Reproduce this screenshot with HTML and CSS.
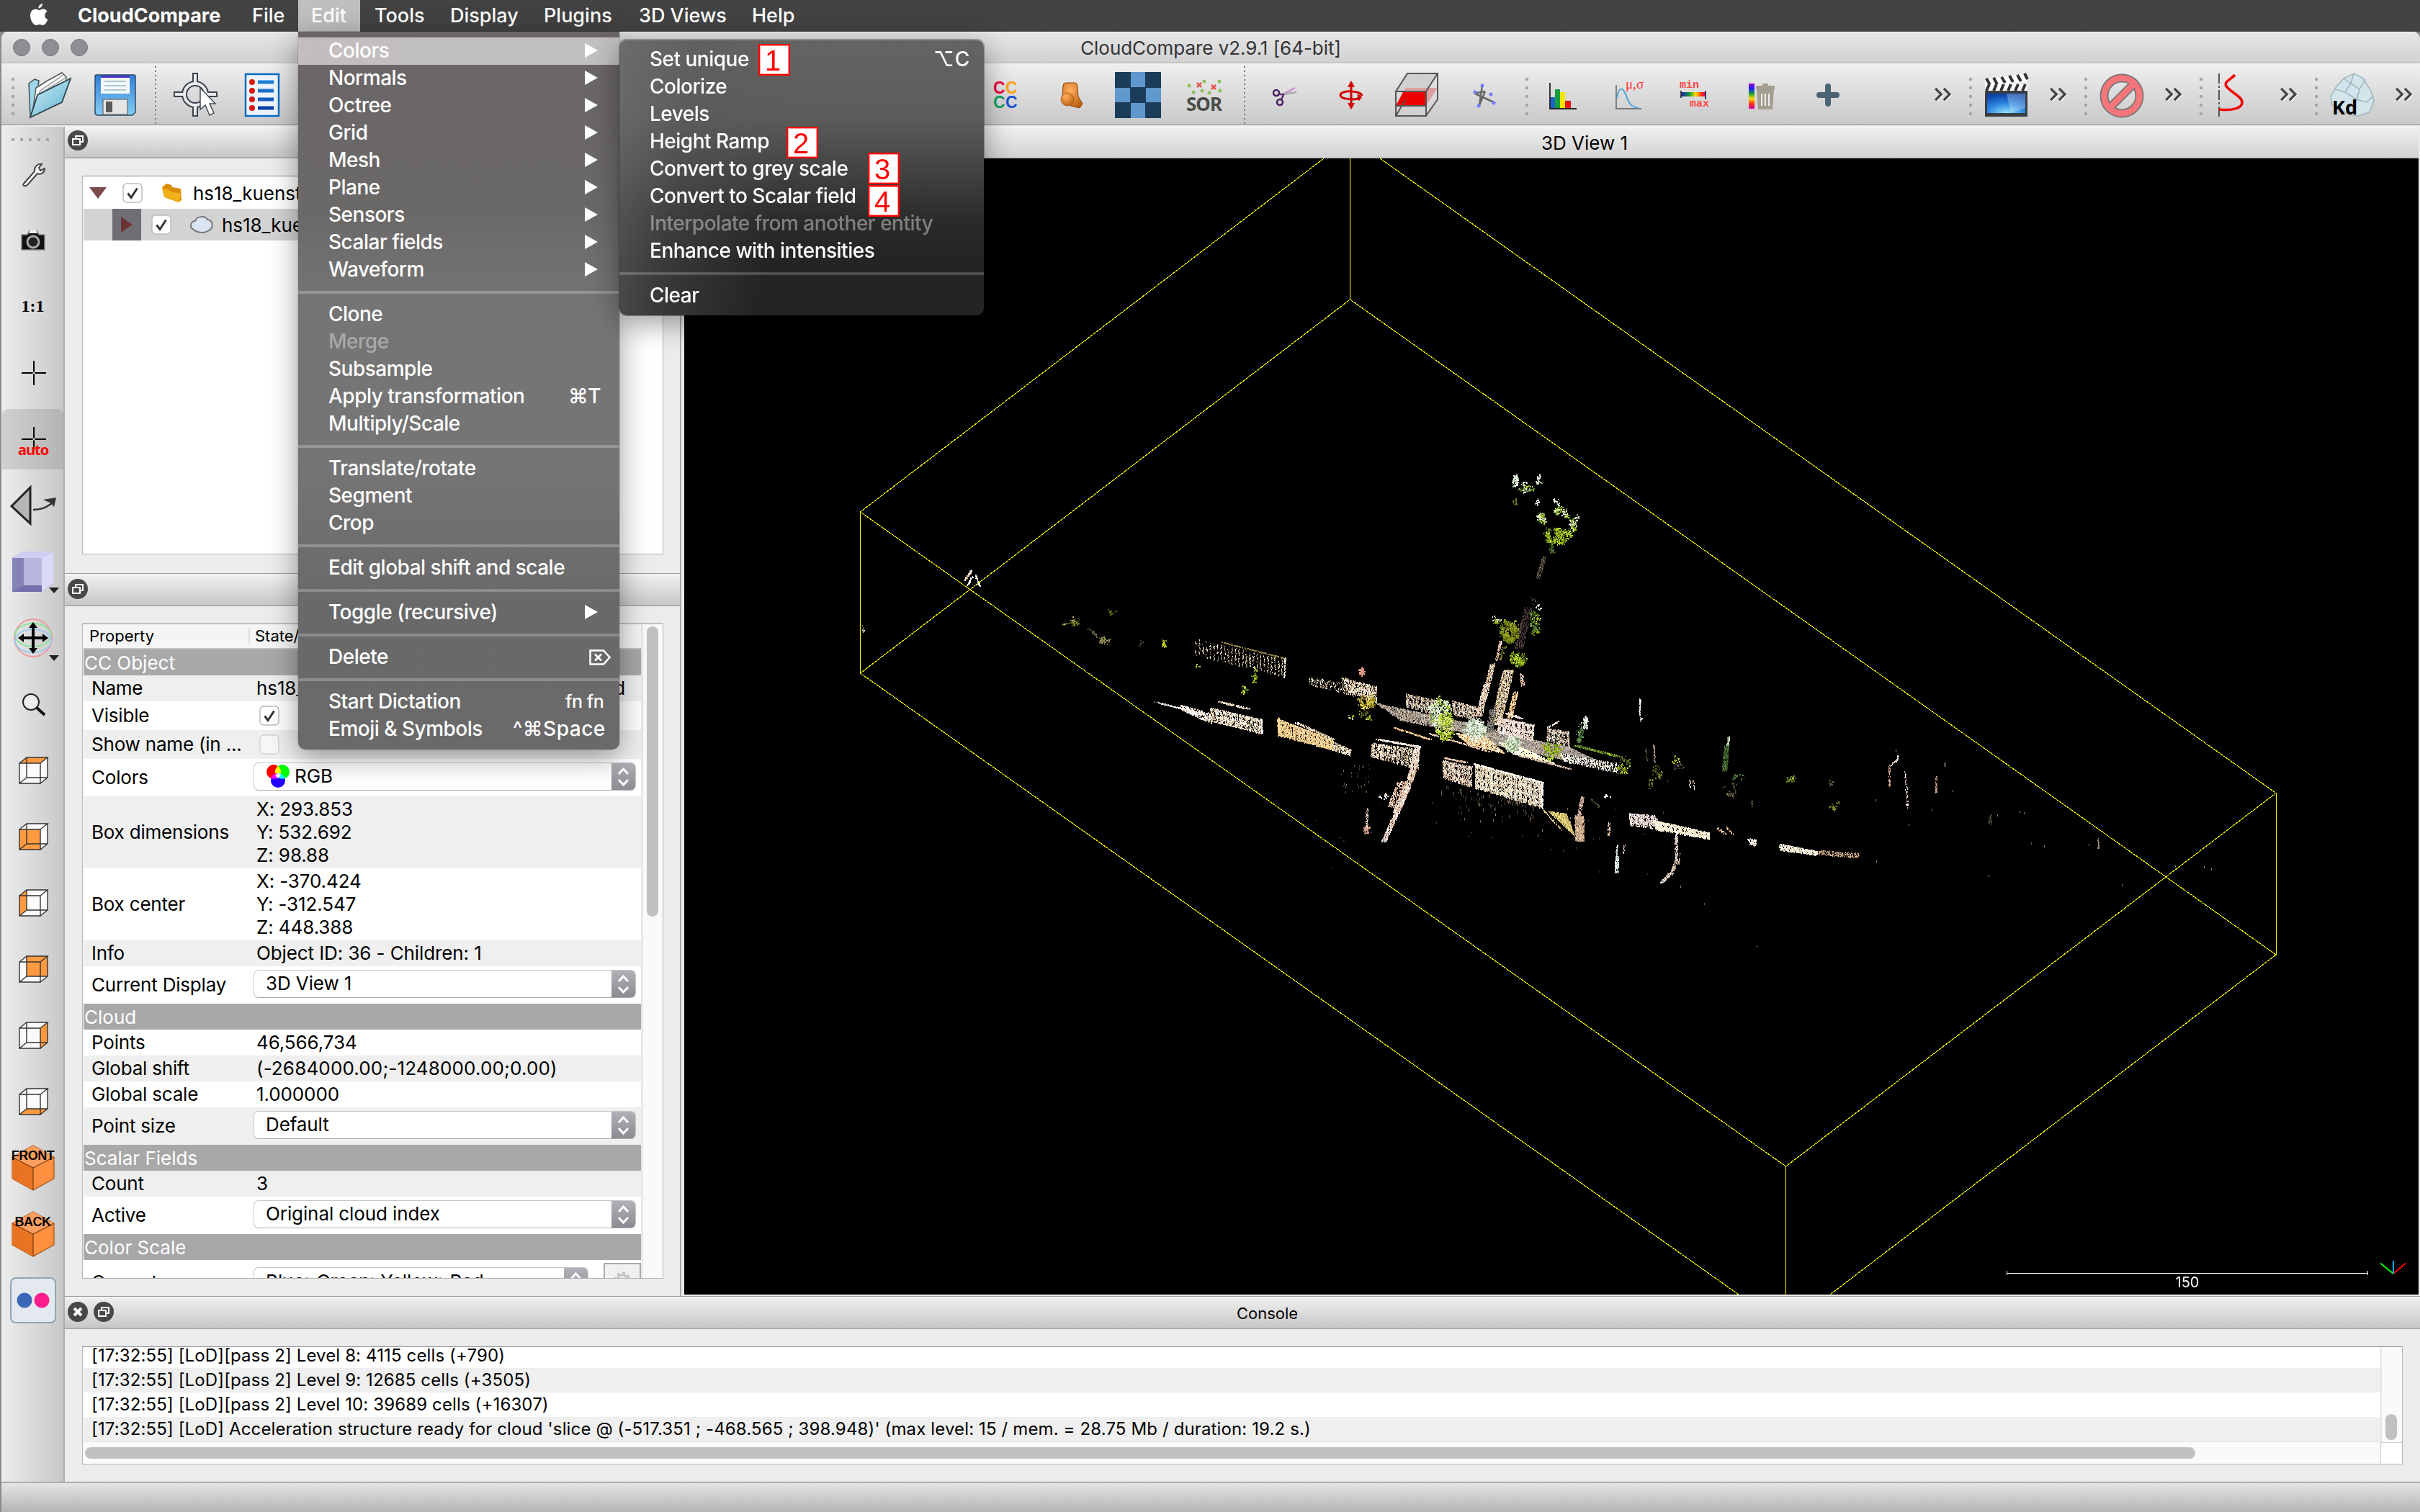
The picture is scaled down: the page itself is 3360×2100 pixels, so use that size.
FILE: index.html
```html
<!DOCTYPE html>
<html lang="en">
<head>
<meta charset="utf-8">
<title>CloudCompare v2.9.1 [64-bit]</title>
<link rel="stylesheet" href="styles.css">
</head>
<body>
<svg class="defs" width="0" height="0">
  <defs>
    <symbol id="frame" viewBox="0 0 64 64">
      <path d="M13 22L23 14H52L42 22V50L52 42V14M13 22H42V50H13ZM23 14V42H52M23 42L13 50" fill="none" stroke="#333" stroke-width="1.4"/>
    </symbol>
    <symbol id="float" viewBox="0 0 28 28">
      <circle cx="14" cy="14" r="14" fill="#484848"/>
      <path d="M11 11V8h10v8h-3M7 12h10v8H7z" fill="none" stroke="#fff" stroke-width="2"/>
    </symbol>
    <symbol id="check" viewBox="0 0 28 28">
      <rect x="1" y="1" width="26" height="26" rx="5" fill="#fff" stroke="#bcbcbc" stroke-width="1.5"/>
      <path d="M7.500 14.500l4.500 6L20.500 7.500" fill="none" stroke="#333" stroke-width="3"/>
    </symbol>
    <symbol id="uncheck" viewBox="0 0 28 28">
      <rect x="1" y="1" width="26" height="26" rx="5" fill="#f6f6f6" stroke="#d4d4d4" stroke-width="1.5"/>
    </symbol>
    <symbol id="more" viewBox="0 0 28 20">
      <path d="M2 1l9 9-9 9M15 1l9 9-9 9" transform="translate(1.500 1.500)" fill="none" stroke="#fff" stroke-width="3"/>
      <path d="M2 1l9 9-9 9M15 1l9 9-9 9" fill="none" stroke="#444" stroke-width="3.600"/>
    </symbol>
    <symbol id="updown" viewBox="0 0 33 39">
      <path d="M10 16l6.500-7 6.500 7M10 24l6.500 7 6.500-7" fill="none" stroke="#fff" stroke-width="3"/>
    </symbol>
    <linearGradient id="gBlue" x1="0" y1="0" x2="0" y2="1"><stop offset="0" stop-color="#2f7fd6"/><stop offset="1" stop-color="#86cdf3"/></linearGradient>
    <linearGradient id="gFolder" x1="0" y1="0" x2="1" y2="1"><stop offset="0" stop-color="#d4f1fa"/><stop offset="1" stop-color="#58aecb"/></linearGradient>
    <radialGradient id="gScreen" cx=".5" cy="1" r="1"><stop offset="0" stop-color="#8fe4ff"/><stop offset=".5" stop-color="#2d86e0"/><stop offset="1" stop-color="#0b3fa5"/></radialGradient>
    <linearGradient id="gRain" x1="0" y1="0" x2="0" y2="1"><stop offset="0" stop-color="#a000d0"/><stop offset=".2" stop-color="#1b20ff"/><stop offset=".4" stop-color="#10a030"/><stop offset=".6" stop-color="#ffe000"/><stop offset=".8" stop-color="#ff3000"/><stop offset="1" stop-color="#d000b0"/></linearGradient>
    <linearGradient id="gRainH" x1="0" y1="0" x2="1" y2="0"><stop offset="0" stop-color="#2010c0"/><stop offset=".35" stop-color="#10a030"/><stop offset=".6" stop-color="#ffe000"/><stop offset=".85" stop-color="#ff2000"/><stop offset="1" stop-color="#d000b0"/></linearGradient>
    <radialGradient id="gOrange" cx=".4" cy=".3" r=".8"><stop offset="0" stop-color="#ffb060"/><stop offset="1" stop-color="#b85a08"/></radialGradient>
  </defs>
</svg>

<nav class="menubar">
  <span class="apple"><svg width="28" height="34" viewBox="0 0 28 34"><path d="M19 1c.3 3-2.500 6.500-5.600 6.500C13 4.500 16 1.300 19 1zM25.500 12c-2 1.200-3.200 3-3.200 5.400 0 2.800 1.600 4.800 4 5.700-1.300 3.900-4 8-6.700 8-1.700 0-2.600-1-4.700-1s-3.100 1-4.700 1C6.500 31 2 24 2 17.500 2 12 5.500 8.700 9.300 8.700c2.200 0 3.900 1.300 5.200 1.300 1.200 0 3.200-1.500 5.800-1.500 2 0 4 1.200 5.200 3.500z" fill="#fff"/></svg></span>
  <span class="mb-item app-name">CloudCompare</span>
  <span class="mb-item">File</span>
  <span class="mb-item open">Edit</span>
  <span class="mb-item">Tools</span>
  <span class="mb-item">Display</span>
  <span class="mb-item">Plugins</span>
  <span class="mb-item">3D Views</span>
  <span class="mb-item">Help</span>
</nav>

<div class="window">
  <header class="titlebar">
    <div class="lights"><i></i><i></i><i></i></div>
    <div class="title">CloudCompare v2.9.1 [64-bit]</div>
  </header>

  <div class="toolbar">
    <div class="group">
      <div class="grip"></div>
      <div class="tool"><svg class="ic" viewBox="0 0 64 64"><path d="M4 16l8-6 6 2-6 44-6 4z" fill="#9fd6ea" stroke="#3f4f58" stroke-width="1.500"/><path d="M10 50L14 22 30 12 50 1l6 6-2 20z" fill="#fff" stroke="#555" stroke-width="1.500"/><path d="M12 48L20 26 52 4M11 50L22 29 55 8" fill="none" stroke="#aaa" stroke-width="2"/><path d="M6 63l10-31L62 9 50 42z" fill="url(#gFolder)" stroke="#2e4650" stroke-width="1.800"/></svg></div>
      <div class="tool"><svg class="ic" viewBox="0 0 64 64"><path d="M4 6q0-2 2-2h52q2 0 2 2v50l-4 4H8q-4 0-4-4z" fill="url(#gBlue)" stroke="#2b4a6c" stroke-width="1.500"/><path d="M12 5h40v25H12z" fill="#f4f8fa"/><path d="M12 5h40v3H12z" fill="#4a36c8"/><path d="M17 13h30M17 19h30M17 25h30" stroke="#a9c8cf" stroke-width="2"/><path d="M15 38h34v21H15z" fill="#e4e4e4" stroke="#555" stroke-width="1"/><path d="M19 41h9v15h-9z" fill="#5a5a5a"/></svg></div>
      <div class="sep"></div>
      <div class="tool"><svg class="ic" viewBox="0 0 64 64"><g fill="none" stroke="#3d434c" stroke-width="8"><path d="M31 1v17M31 45v17M1 31h17M45 31h17"/><circle cx="31" cy="31" r="15"/></g><g fill="none" stroke="#e9ebee" stroke-width="4"><path d="M31 3v15M31 45v15M3 31h15M45 31h15"/><circle cx="31" cy="31" r="15"/></g><path d="M38 22v30l7-6 6 14 6-3-6-13h8z" fill="#fff" stroke="#444b55" stroke-width="1.500"/></svg></div>
      <div class="tool"><svg class="ic" viewBox="0 0 64 64"><path d="M9 3h46v58H9z" fill="#eef4ff" stroke="#0a6cc0" stroke-width="2.500"/><g fill="#d8170c"><circle cx="18" cy="14" r="4"/><circle cx="18" cy="26" r="4"/><circle cx="18" cy="38" r="4"/><circle cx="18" cy="50" r="4"/></g><path d="M26 14h22" stroke="#1c7fd6" stroke-width="5"/><path d="M26 26h22" stroke="#1a6fcb" stroke-width="5"/><path d="M26 38h22" stroke="#155fbb" stroke-width="5"/><path d="M26 50h22" stroke="#083fa6" stroke-width="5"/></svg></div>
      <div class="covered"></div>
      <div class="tool"><span class="cccc"><b>C</b><b>C</b><b>C</b><b>C</b></span></div>
      <div class="tool"><svg class="ic" viewBox="0 0 64 64"><path d="M20 19q0-4 4-4h12q4 0 4 5l1 14 6 10-4 6-12-3-12-12z" fill="url(#gOrange)" stroke="#8c4508" stroke-width="1"/><ellipse cx="26" cy="38" rx="9" ry="9" fill="url(#gOrange)" stroke="#a85a10" stroke-width=".8"/></svg></div>
      <div class="tool"><svg class="ic" viewBox="0 0 64 64"><path d="M0 0h64v64H0z" fill="#1c3d5a"/><path d="M22 0h20v21H22zM22 43h20v21H22zM0 22h21v20H0zM43 22h21v20H43z" fill="#6097cc"/></svg></div>
      <div class="tool"><span class="sor"><svg width="50" height="20" viewBox="0 0 50 20"><g fill="#8cc060"><circle cx="4" cy="9" r="2.500"/><circle cx="25" cy="3" r="2.500"/><circle cx="46" cy="3" r="2.500"/><circle cx="10" cy="18" r="2.500"/><circle cx="22" cy="16" r="2.500"/><circle cx="47" cy="16" r="2.500"/><circle cx="32" cy="19" r="2.500"/></g><path d="M15 5l6 6m0-6l-6 6M35 8l6 6m0-6l-6 6" stroke="#e2574a" stroke-width="2.500"/></svg>SOR</span></div>
      <div class="sep"></div>
      <div class="tool"><svg class="ic" viewBox="0 0 64 64"><g fill="none" stroke-width="2.500"><circle cx="20" cy="29" r="4" stroke="#4a2060"/><circle cx="25" cy="42" r="4" stroke="#4a2060"/><path d="M24 31l8 0M27 38l4-8" stroke="#5a3070"/><path d="M31 30l15-8" stroke="#c78fd0"/><path d="M31 31l17-3" stroke="#a9a9a9"/></g></svg></div>
      <div class="tool"><svg class="ic" viewBox="0 0 64 64"><path d="M32 14v36M47 33c-2-8-30-8-30-1 0 6 22 8 28 3M41 32l4 3-3 4" fill="none" stroke="#d00000" stroke-width="3"/><path d="M27 21l5-9 5 9zM27 43l5 9 5-9z" fill="#d00000"/></svg></div>
      <div class="tool"><svg class="ic" viewBox="0 0 64 64"><path d="M2 27L18 2h42L44 27z" fill="#d0d0d0"/><path d="M16 22h44L44 47H2z" fill="#dba0a0"/><path d="M12 28h32v19H2z" fill="#ee0000"/><path d="M2 27L18 2h42L44 27zM2 27v34h42V27M44 61l16-23V2M2 61l13-22M2 47h42" fill="none" stroke="#555" stroke-width="2"/></svg></div>
      <div class="tool"><svg class="ic" viewBox="0 0 64 64"><path d="M30 19L26 46M20 30l26 12M22 29l12-2M26 46l8-19" fill="none" stroke="#666" stroke-width="2.500"/><g fill="#7a7aff"><circle cx="30" cy="19" r="2.500"/><circle cx="20" cy="28" r="2.500"/><circle cx="25" cy="47" r="2.500"/><circle cx="46" cy="43" r="2.500"/><circle cx="42" cy="31" r="2.500"/></g></svg></div>
    </div>
    <div class="group">
      <div class="grip"></div>
      <div class="tool"><svg class="ic" viewBox="0 0 64 64"><path d="M14 35h7v16h-7z" fill="#1e64c8"/><path d="M21 24h7v27h-7z" fill="#14a03c"/><path d="M28 28h7v23h-7z" fill="#f5e400"/><path d="M35 40h8v11h-8z" fill="#e81010"/><path d="M14 15v36h37" fill="none" stroke="#222" stroke-width="1.800"/></svg></div>
      <div class="tool"><span class="gauss"><svg class="ic" viewBox="0 0 64 64"><path d="M14 18v33h35" fill="none" stroke="#777" stroke-width="1.800"/><path d="M15 36c3-17 8-15 13-3 4 12 8 16 17 17" fill="none" stroke="#4aa3dc" stroke-width="2"/></svg><em>μ,σ</em></span></div>
      <div class="tool"><span class="minmax"><em>min</em><svg width="40" height="12" viewBox="0 0 40 12"><path d="M2 2h34v6H2z" fill="url(#gRainH)"/><path d="M2 0v10M36 0v12" stroke="#333" stroke-width="1.800"/></svg><em>max</em></span></div>
      <div class="tool"><svg class="ic" viewBox="0 0 64 64"><path d="M14 16h8v35h-8z" fill="url(#gRain)"/><path d="M24 19h26v5H24zM33 16h8v4h-8zM25 24h24l-2 28H27z" fill="#a39e90"/><path d="M32 30v17M37 30v17M42 30v17" stroke="#eee" stroke-width="2"/></svg></div>
      <div class="tool"><svg class="ic" viewBox="0 0 64 64"><path d="M32 20v24M20 32h24" stroke="#4c6472" stroke-width="8" stroke-linecap="round"/></svg></div>
      <svg class="more"><use href="#more"/></svg>
    </div>
    <div class="group">
      <div class="grip"></div>
      <div class="tool"><svg class="ic" viewBox="0 0 64 64"><path d="M2 10L60 2v12L2 20z" fill="#fff"/><path d="M4 9l5 9M14 8l5 9M25 7l5 8M36 5l5 9M47 4l5 9M57 2l4 8" stroke="#333" stroke-width="4"/><path d="M2 17h59v45H2z" fill="#3a3e42"/><path d="M2 17h59v9H2z" fill="#fff"/><path d="M8 17l-4 9M18 17l-4 9M28 17l-4 9M38 17l-4 9M48 17l-4 9M58 17l-4 9" stroke="#333" stroke-width="4"/><path d="M5 30h53v27H5z" fill="url(#gScreen)"/><path d="M32 30h26v20l-20 7z" fill="#fff" opacity=".25"/></svg></div>
      <svg class="more"><use href="#more"/></svg>
    </div>
    <div class="group">
      <div class="grip"></div>
      <div class="tool"><svg class="ic" viewBox="0 0 64 64"><g fill="none"><circle cx="32" cy="33" r="24.500" stroke="#757575" stroke-width="12"/><path d="M15 50l34-34" stroke="#757575" stroke-width="12"/><circle cx="32" cy="33" r="24.500" stroke="#f4767a" stroke-width="8.500"/><path d="M15 50l34-34" stroke="#f4767a" stroke-width="8.500"/></g></svg></div>
      <svg class="more"><use href="#more"/></svg>
    </div>
    <div class="group">
      <div class="grip"></div>
      <div class="tool"><svg class="ic" viewBox="0 0 64 64"><path d="M7 2v60" stroke="#333" stroke-width="1.600" stroke-dasharray="14 3 3 3"/><path d="M29 4C22 12 10 14 20 23s20 13 19 20-12 11-32 9" fill="none" stroke="#f30000" stroke-width="3.600"/></svg></div>
      <svg class="more"><use href="#more"/></svg>
    </div>
    <div class="group">
      <div class="grip"></div>
      <div class="tool"><span class="kd"><svg class="ic" viewBox="0 0 64 64"><path d="M2 34L10 20 20 9 34 2l12 6 12 18 4 14-6 16-16 5-12-2L4 46z" fill="#d3e4ea" stroke="#9fb4bc" stroke-width="1.500"/><path d="M34 2l-4 14 12 8 8-14M20 9l10 7-8 12-14-4M42 24l-4 14 14 4 8-8M22 28l16 10-6 16" fill="none" stroke="#9fb4bc" stroke-width="1.500"/></svg><b>Kd</b></span></div>
      <svg class="more"><use href="#more"/></svg>
    </div>
  </div>

  <div class="main">
    <aside class="sidebar">
      <div class="grip-h"></div>
      <div class="side"><svg class="ic" viewBox="0 0 64 64"><path d="M19 45l15-17c-1-6 4-11 10-10l-4 5 2 4 6-3c0 6-5 9-10 7L24 47c-4 3-7 0-5-2z" fill="#f5f5f5" stroke="#444" stroke-width="2"/></svg></div>
      <div class="side"><svg class="ic" viewBox="0 0 64 64"><path d="M16 24h8l3-6h10l3 6h8v21H16z" fill="#111" stroke="#888" stroke-width="1.600"/><path d="M26 22l2-5h8l2 5z" fill="#eee"/><circle cx="32" cy="34" r="8" fill="#222" stroke="#aaa" stroke-width="3"/></svg></div>
      <div class="side"><b class="one">1:1</b></div>
      <div class="side"><svg class="ic" viewBox="0 0 64 64"><path d="M33 15v34M16 32h34" stroke="#000" stroke-width="2"/><circle cx="33" cy="32" r="1.500" fill="#ddd"/></svg></div>
      <div class="side active"><svg class="ic" viewBox="0 0 64 64"><path d="M33 15v34M16 32h34" stroke="#000" stroke-width="2"/><circle cx="33" cy="32" r="1.500" fill="#ddd"/></svg><b class="auto">auto</b></div>
      <div class="side"><svg class="ic" viewBox="0 0 64 64"><path d="M2 33L28 7v50z" fill="#b5b5b5" stroke="#222" stroke-width="3"/><path d="M32 38c14 0 18-4 26-9" fill="none" stroke="#333" stroke-width="2.400"/><path d="M46 24l18-3-3 13-4-5z" fill="#333"/></svg></div>
      <div class="side"><svg class="ic" viewBox="0 0 64 64"><path d="M3 13L19 4h41v43L44 60H3z" fill="#b9b6dd"/><path d="M3 13L19 4v48L3 60z" fill="#8582b6"/><path d="M3 13L19 4h41L44 13z" fill="#cfcdf2"/><path d="M44 13L60 4v43L44 60z" fill="#dad9f8"/><path d="M3 60l16-9h25v9z" fill="#7370ab"/><path d="M54 54h14l-7 8z" fill="#222"/></svg></div>
      <div class="side"><svg class="ic" viewBox="0 0 64 64"><g fill="none" stroke-width="2"><circle cx="32" cy="32" r="26" stroke="#ef9a9a"/><ellipse cx="32" cy="28" rx="25" ry="16" stroke="#8fe09a"/><ellipse cx="32" cy="36" rx="25" ry="16" stroke="#9fc9ea"/></g><path d="M32 14v36M14 32h36" stroke="#000" stroke-width="4"/><path d="M26 18l6-8 6 8zM26 46l6 8 6-8zM19 26l-8 6 8 6zM45 26l8 6-8 6z"/><path d="M54 56h14l-7 8z" fill="#222"/></svg></div>
      <div class="side"><svg class="ic" viewBox="0 0 64 64"><circle cx="29" cy="29" r="11" fill="#eee" stroke="#222" stroke-width="2"/><path d="M37 37l11 10" stroke="#111" stroke-width="4"/></svg></div>
      <div class="side"><svg class="ic" viewBox="0 0 64 64"><path d="M13 22L23 14H52V42L42 50H13z" fill="#fafafa"/><path d="M13 22L23 14H52L42 22z" fill="#ff9a40"/><use href="#frame" width="64" height="64"/></svg></div>
      <div class="side"><svg class="ic" viewBox="0 0 64 64"><path d="M13 22L23 14H52V42L42 50H13z" fill="#fafafa"/><path d="M13 22H42V50H13z" fill="#ff9a40"/><use href="#frame" width="64" height="64"/></svg></div>
      <div class="side"><svg class="ic" viewBox="0 0 64 64"><path d="M13 22L23 14H52V42L42 50H13z" fill="#fafafa"/><path d="M13 22L23 14V42L13 50z" fill="#ff9a40"/><use href="#frame" width="64" height="64"/></svg></div>
      <div class="side"><svg class="ic" viewBox="0 0 64 64"><path d="M13 22L23 14H52V42L42 50H13z" fill="#fafafa"/><path d="M23 14H52V42H23z" fill="#ff9a40"/><use href="#frame" width="64" height="64"/></svg></div>
      <div class="side"><svg class="ic" viewBox="0 0 64 64"><path d="M13 22L23 14H52V42L42 50H13z" fill="#fafafa"/><path d="M42 22L52 14V42L42 50z" fill="#ff9a40"/><use href="#frame" width="64" height="64"/></svg></div>
      <div class="side"><svg class="ic" viewBox="0 0 64 64"><path d="M13 22L23 14H52V42L42 50H13z" fill="#fafafa"/><path d="M13 50L23 42H52L42 50z" fill="#ff9a40"/><use href="#frame" width="64" height="64"/></svg></div>
      <div class="side"><svg class="ic" viewBox="0 0 64 64"><path d="M3 17L32 1 61 17V47L32 63 3 47z" fill="#ff9040" stroke="#a05010" stroke-width="1.200"/><path d="M3 17L32 32V63L3 47z" fill="#e87322"/><path d="M3 17L32 1 61 17 32 32z" fill="#ffa062"/><path d="M3 17L32 32 61 17M32 32V63" fill="none" stroke="#7a3d0c" stroke-width="1.200"/></svg><b class="face">FRONT</b></div>
      <div class="side"><svg class="ic" viewBox="0 0 64 64"><path d="M3 17L32 1 61 17V47L32 63 3 47z" fill="#ff9040" stroke="#a05010" stroke-width="1.200"/><path d="M3 17L32 32V63L3 47z" fill="#e87322"/><path d="M3 17L32 1 61 17 32 32z" fill="#ffa062"/><path d="M3 17L32 32 61 17M32 32V63" fill="none" stroke="#7a3d0c" stroke-width="1.200"/></svg><b class="face">BACK</b></div>
      <div class="side"><svg class="ic" viewBox="0 0 64 64"><rect x="1" y="1" width="62" height="62" rx="7" fill="#e3e9ee" stroke="#93a5b2" stroke-width="2"/><circle cx="20" cy="32" r="10.500" fill="#3a67b8"/><circle cx="44" cy="32" r="10.500" fill="#fb1e8c"/></svg></div>
    </aside>

    <div class="work">
      <div class="upper">
        <div class="docks">
          <div class="dock-head"><svg class="dot"><use href="#float"/></svg></div>
          <div class="tree">
            <div class="node"><svg class="tri-d" viewBox="0 0 24 16"><path d="M0 0h24L12 16z" fill="#7b4b4b"/></svg><svg class="chk c1"><use href="#check"/></svg><svg class="folder" viewBox="0 0 30 28"><path d="M1 6l6-5 7 2 1 3 12 2 1 16-4 3-17-6z" fill="#d98c04"/><path d="M1 8l8 1 4 3 14 3-2 12L4 20z" fill="#f2b01a"/></svg><span>hs18_kuenstlergasse</span></div>
            <div class="node sel"><svg class="tri-r" viewBox="0 0 40 44"><path d="M0 0h40v44H0z" fill="#6f6e74"/><path d="M12 11l16 11-16 11z" fill="#6b3434"/></svg><svg class="chk c2"><use href="#check"/></svg><svg class="cloud" viewBox="0 0 32 26"><path d="M5 20C-2 17 1 8 7 8c2-7 14-8 17-2 8 1 9 12 2 15-5 4-16 4-21-1z" fill="#dbe4f2" stroke="#777" stroke-width="2"/></svg><span>hs18_kuenstlergasse</span></div>
          </div>
          <div class="dock-head second"><svg class="dot"><use href="#float"/></svg></div>
          <div class="props">
            <div class="table">
              <div class="thead"><span>Property</span><span>State/Value</span></div>
              <div class="sect">CC Object</div>
              <div class="row alt"><label>Name</label><span class="long"><span>hs18_kuenstlergasse</span><span>cloud</span></span></div>
              <div class="row h40"><label>Visible</label><svg class="chk"><use href="#check"/></svg></div>
              <div class="row h40 alt"><label>Show name (in ...</label><svg class="chk"><use href="#uncheck"/></svg></div>
              <div class="row h52"><label>Colors</label><div class="combo rgb"><svg width="32" height="32" viewBox="0 0 32 32"><circle cx="10" cy="10" r="10" fill="#f00"/><circle cx="22" cy="10" r="10" fill="#0f0"/><circle cx="16" cy="22" r="10" fill="#20f"/><path d="M16 2a10 10 0 0 1 0 16 10 10 0 0 1 0-16z" fill="#ff0"/><path d="M6 19a10 10 0 0 1 10-7v6q-4 3-10 1z" fill="#f0f"/><path d="M26 19a10 10 0 0 0-10-7v6q4 3 10 1z" fill="#0ff"/><path d="M16 12l4 3-4 4-4-4z" fill="#fff"/></svg><span>RGB</span><svg class="ud"><use href="#updown"/></svg></div></div>
              <div class="row h100 alt"><label>Box dimensions</label><span>X: 293.853<br>Y: 532.692<br>Z: 98.88</span></div>
              <div class="row h100"><label>Box center</label><span>X: -370.424<br>Y: -312.547<br>Z: 448.388</span></div>
              <div class="row alt"><label>Info</label><span>Object ID: 36 - Children: 1</span></div>
              <div class="row h52"><label>Current Display</label><div class="combo"><span>3D View 1</span><svg class="ud"><use href="#updown"/></svg></div></div>
              <div class="sect">Cloud</div>
              <div class="row"><label>Points</label><span>46,566,734</span></div>
              <div class="row alt"><label>Global shift</label><span class="wide">(-2684000.00;-1248000.00;0.00)</span></div>
              <div class="row"><label>Global scale</label><span>1.000000</span></div>
              <div class="row h52 alt"><label>Point size</label><div class="combo"><span>Default</span><svg class="ud"><use href="#updown"/></svg></div></div>
              <div class="sect">Scalar Fields</div>
              <div class="row alt"><label>Count</label><span>3</span></div>
              <div class="row h52"><label>Active</label><div class="combo"><span>Original cloud index</span><svg class="ud"><use href="#updown"/></svg></div></div>
              <div class="sect">Color Scale</div>
              <div class="row h64"><label>Current</label><div class="combo short"><span>Blue&gt;Green&gt;Yellow&gt;Red</span><svg class="ud"><use href="#updown"/></svg></div><div class="gear"><svg width="28" height="28" viewBox="0 0 28 28"><circle cx="14" cy="14" r="9" fill="none" stroke="#c4c4c4" stroke-width="5" stroke-dasharray="4 3"/><circle cx="14" cy="14" r="7" fill="none" stroke="#c4c4c4" stroke-width="3"/></svg></div></div>
            </div>
            <div class="vbar"><i></i></div>
          </div>
        </div>

        <div class="view">
          <div class="view-head">3D View 1</div>
          <div class="scene">
            <canvas id="cloud" width="2408" height="1578"></canvas>
            <svg class="overlay" viewBox="950 220 2408 1578">
              <path d="M1194.500 711L1838 220M1194.500 711V935L1874.500 416V220M1916 220L3160 1101.500V1326L1874.500 416M1194.500 711L2479.500 1620L3160 1101.500M1194.500 935L2414 1798M2479.500 1620V1798M3160 1326L2541 1798" fill="none" stroke="#ffff00" stroke-width="1" shape-rendering="crispEdges"/>
              <path d="M2786.500 1765v6M2786.500 1768H3288M3287.500 1765v6" fill="none" stroke="#fff" stroke-width="1" shape-rendering="crispEdges"/>
              <path d="M3323 1769L3305 1754.500" stroke="#0f0" stroke-width="2"/><path d="M3323 1769L3340 1754.500" stroke="#f00" stroke-width="2"/><path d="M3323 1769V1751" stroke="#0af" stroke-width="2"/>
            </svg>
            <span class="scale">150</span>
          </div>
        </div>
      </div>

      <div class="dock-head console-head"><svg class="dot" viewBox="0 0 28 28"><circle cx="14" cy="14" r="14" fill="#484848"/><path d="M9 9l10 10M19 9L9 19" stroke="#fff" stroke-width="4"/></svg><svg class="dot"><use href="#float"/></svg><span>Console</span></div>
      <div class="console">
        <div class="log">
          <p>[17:32:55] [LoD][pass 2] Level 8: 4115 cells (+790)</p>
          <p>[17:32:55] [LoD][pass 2] Level 9: 12685 cells (+3505)</p>
          <p>[17:32:55] [LoD][pass 2] Level 10: 39689 cells (+16307)</p>
          <p>[17:32:55] [LoD] Acceleration structure ready for cloud 'slice @ (-517.351 ; -468.565 ; 398.948)' (max level: 15 / mem. = 28.75 Mb / duration: 19.2 s.)</p>
        </div>
        <div class="log-v"><i></i></div>
        <div class="log-h"><i></i></div>
        <div class="corner"></div>
      </div>
    </div>
  </div>
  <footer class="status"></footer>
</div>

<div class="menu edit-menu">
  <div class="mi hot">Colors<i class="arr"></i></div>
  <div class="mi">Normals<i class="arr"></i></div>
  <div class="mi">Octree<i class="arr"></i></div>
  <div class="mi">Grid<i class="arr"></i></div>
  <div class="mi">Mesh<i class="arr"></i></div>
  <div class="mi">Plane<i class="arr"></i></div>
  <div class="mi">Sensors<i class="arr"></i></div>
  <div class="mi">Scalar fields<i class="arr"></i></div>
  <div class="mi">Waveform<i class="arr"></i></div>
  <hr>
  <div class="mi">Clone</div>
  <div class="mi off">Merge</div>
  <div class="mi">Subsample</div>
  <div class="mi">Apply transformation<kbd class="k-t">⌘T</kbd></div>
  <div class="mi">Multiply/Scale</div>
  <hr>
  <div class="mi">Translate/rotate</div>
  <div class="mi">Segment</div>
  <div class="mi">Crop</div>
  <hr>
  <div class="mi">Edit global shift and scale</div>
  <hr>
  <div class="mi">Toggle (recursive)<i class="arr"></i></div>
  <hr>
  <div class="mi">Delete<svg class="del" width="30" height="22" viewBox="0 0 30 22"><path d="M1.500 1.500H20L28.500 11 20 20.500H1.500zM8 6.500l9 9M17 6.500l-9 9" fill="none" stroke="#fff" stroke-width="2.500"/></svg></div>
  <hr>
  <div class="mi">Start Dictation<kbd class="k-fn">fn fn</kbd></div>
  <div class="mi">Emoji &amp; Symbols<kbd class="k-sp">^⌘Space</kbd></div>
</div>

<div class="menu color-menu">
  <div class="mi">Set unique<kbd class="k-c">⌥C</kbd></div>
  <div class="mi">Colorize</div>
  <div class="mi">Levels</div>
  <div class="mi">Height Ramp</div>
  <div class="mi">Convert to grey scale</div>
  <div class="mi">Convert to Scalar field</div>
  <div class="mi off">Interpolate from another entity</div>
  <div class="mi">Enhance with intensities</div>
  <hr>
  <div class="mi">Clear</div>
</div>
<div class="tag t1">1</div>
<div class="tag t2">2</div>
<div class="tag t3">3</div>
<div class="tag t4">4</div>
<script src="cloud.js"></script>
</body>
</html>
```
FILE: styles.css
```css
* { box-sizing: border-box; }
html, body { margin: 0; height: 2100px; width: 3360px; overflow: hidden; }
body { font-family: Inter, "Liberation Sans", sans-serif; font-size: 26px; color: #000; background: #8a8a8a; position: relative; display: flex; flex-direction: column; }
svg { display: block; flex: none; overflow: visible; }
.defs { position: absolute; }

/* menu bar */
.menubar { height: 44px; background: #424242; color: #fff; font-size: 27px; display: grid; grid-template-columns: 88px 242px 84px 86px 105px 130px 132px 157px 1fr; line-height: 44px; flex: none; font-weight: 500; white-space: nowrap; }
.apple { padding: 4px 0 0 40px; }
.mb-item { padding-left: 20px; }
.mb-item.app-name { font-weight: 700; }
.mb-item.open { background: #bfbfbf; padding-left: 18px; }

/* window */
.window { flex: 1; display: flex; flex-direction: column; background: #ececec; border-left: 2px solid #8a8a8a; border-radius: 10px 10px 0 0; overflow: hidden; }
.titlebar { height: 44px; background: linear-gradient(#f4f4f4 0, #e6e6e6 2px, #d2d2d2 42px); border-bottom: 1px solid #a9a9a9; position: relative; flex: none; }
.lights { position: absolute; left: 16px; top: 10px; display: flex; gap: 16px; }
.lights i { width: 24px; height: 24px; border-radius: 50%; background: #8e8d93; border: 1px solid #76757a; }
.title { text-align: center; line-height: 45px; color: #333; letter-spacing: -.05px; }
.toolbar { height: 88px; flex: none; display: grid; grid-template-columns: 2102px 616px 160px 160px 160px 160px; background: linear-gradient(#fff 0, #eee 2px, #c9c9c9 84px, #adadad 84px, #adadad 86px, #ececec 86px); }
.group { display: flex; align-items: center; height: 88px; position: relative; overflow: hidden; }
.grip { width: 20px; height: 56px; flex: none; background: radial-gradient(circle, #a5a5a5 2px, transparent 2.6px) 0 0 / 32px 12px; }
.tool { width: 92px; height: 88px; flex: none; display: flex; align-items: center; justify-content: center; }
.ic { width: 64px; height: 64px; }
.sep { width: 20px; height: 80px; flex: none; background: repeating-linear-gradient(#777 0 2px, transparent 2px 6px) 9px 0 / 2px 100% no-repeat; }
.covered { width: 940px; flex: none; }
.more { position: absolute; width: 28px; height: 18px; right: 8px; top: 34px; }
.cccc { display: grid; grid-template-columns: 17px 17px; font: 700 23px/20px "Liberation Sans", sans-serif; }
.cccc b:nth-child(1) { color: #f0003c; }
.cccc b:nth-child(2) { color: #ffa012; }
.cccc b:nth-child(3) { color: #12a060; }
.cccc b:nth-child(4) { color: #1c50d8; }
.sor { font: 700 26px/28px "Noto Sans", sans-serif; color: #4a4d48; letter-spacing: -1px; padding-top: 4px; }
.gauss { position: relative; }
.gauss em { position: absolute; left: 27px; top: 6px; font: 19px "Liberation Serif", serif; color: #f33; }
.minmax { width: 44px; font: 700 15px/14px "Liberation Mono", monospace; color: #f44; display: flex; flex-direction: column; }
.minmax em { font-style: normal; }
.minmax em + svg + em { padding-left: 14px; }
.kd { position: relative; }
.kd b { position: absolute; left: 4px; top: 31px; font: 700 27px/36px "Noto Sans", sans-serif; }

/* left bar */
.main { flex: 1; display: flex; min-height: 0; }
.sidebar { width: 88px; flex: none; background: linear-gradient(90deg, #ededed, #c9c9c9 84px); border-right: 2px solid #adadad; padding-left: 1px; }
.grip-h { height: 20px; margin-left: 9px; width: 60px; background: radial-gradient(circle, #a5a5a5 2px, transparent 2.6px) 0 8px / 12px 20px; }
.side { height: 92px; display: flex; align-items: center; justify-content: center; position: relative; }
.side.active { height: 84px; margin: 4px 0; background: linear-gradient(90deg, #d0d0d0, #b4b4b4); border-radius: 8px 8px 0 0; }
.one { font: 700 24px "Liberation Serif", serif; padding-bottom: 2px; }
.auto { position: absolute; left: 22px; top: 43px; font: 700 20px/28px "Noto Sans", sans-serif; color: #f00; letter-spacing: -1px; }
.face { position: absolute; left: 0; right: 0; top: 17px; text-align: center; font: 700 18px/24px "Liberation Sans", sans-serif; letter-spacing: -.5px; }

/* docks */
.work { flex: 1; display: flex; flex-direction: column; min-width: 0; }
.upper { height: 1624px; flex: none; display: grid; grid-template-columns: 856px 4px 1fr; }
.docks { border-right: 2px solid #a9a9a9; display: flex; flex-direction: column; }
.dock-head { height: 44px; flex: none; background: linear-gradient(#f8f8f8 0, #eee 3px, #c8c8c8 42px); border-bottom: 2px solid #adadad; display: flex; gap: 8px; padding: 5px 0 0 4px; position: relative; }
.dot { width: 28px; height: 28px; }
.tree { margin: 24px 23px 26px 24px; height: 526px; flex: none; background: #fff; border: 1px solid #b4b4b4; border-top-color: #8c8c8c; padding: 1px; }
.node { height: 44px; display: flex; align-items: center; white-space: nowrap; }
.node span { letter-spacing: -.05px; }
.sel { background: #d3d3d3; }
.tri-d { width: 24px; height: 16px; margin-left: 8px; }
.tri-r { width: 40px; height: 44px; margin-left: 40px; }
.chk { width: 28px; height: 28px; }
.c1 { margin-left: 22px; }
.c2 { margin-left: 14px; }
.folder { width: 30px; height: 28px; margin: 0 14px 0 26px; }
.cloud { width: 32px; height: 26px; margin: 0 12px 0 26px; }
.dock-head.second { border-top: 1px solid #999; height: 46px; padding-top: 7px; }
.props { margin: 24px 23px 24px 24px; border: 1px solid #b4b4b4; border-top-color: #8c8c8c; height: 910px; flex: none; display: flex; overflow: hidden; background: #fff; }
.table { width: 778px; flex: none; padding-left: 1px; border-right: 3px solid #e8e8e8; }
.thead { height: 35px; background: #f5f5f5; border-bottom: 2px solid #c4c4c4; font-size: 22px; line-height: 32px; display: grid; grid-template-columns: 221px 1fr; padding-left: 8px; }
.thead span + span { padding-left: 7px; margin: 5px 0; line-height: 22px; border-left: 2px solid #ddd; }
.sect { height: 36px; line-height: 38px; background: #a8a8a8; color: #fff; padding-left: 1px; }
.row { height: 36px; display: grid; grid-template-columns: 229px 1fr; align-items: center; padding-left: 11px; line-height: 32px; white-space: nowrap; overflow: hidden; letter-spacing: -.1px; }
.row label { letter-spacing: -.2px; }
.row .wide { letter-spacing: .15px; }
.row .chk { margin-left: 4px; }
.alt { background: #efefef; }
.h40 { height: 40px; }
.h52 { height: 52px; }
.h64 { height: 64px; grid-template-columns: 225px 486px 52px; align-items: start; }
.h64 label { padding-top: 17px; line-height: 28px; }
.h100 { height: 100px; }
.long { display: flex; justify-content: space-between; width: 512px; }
.combo { height: 39px; width: 531px; margin: -4px 0 0 -4px; background: #fff; border: 1px solid #c6c6c6; border-bottom-color: #aaa; border-radius: 7px; display: flex; align-items: center; padding-left: 16px; position: relative; overflow: hidden; }
.combo.rgb { padding-left: 17px; gap: 7px; }
.ud { width: 33px; height: 39px; margin-left: auto; background: linear-gradient(#b2b1b7, #8b8a90); }
.short { width: 465px; margin: 10px 0 0 0; }
.gear { width: 52px; height: 56px; margin-top: 4px; border: 2px solid #aaa; background: #f0f0f0; padding: 8px 10px; }
.vbar { flex: 1; background: #fafafa; padding: 3px 5px; }
.vbar i { display: block; width: 16px; height: 403px; border-radius: 8px; background: #c1c1c1; }

/* 3D view */
.view { grid-column: 3; display: flex; flex-direction: column; padding-right: 2px; }
.view-head { height: 44px; flex: none; background: linear-gradient(#f8f8f8 0, #eee 3px, #d2d2d2 42px); border-bottom: 1px solid #aaa; text-align: center; padding-left: 92px; line-height: 46px; }
.scene { height: 1578px; background: #000; position: relative; overflow: hidden; }
.scene canvas, .overlay { position: absolute; left: 0; top: 0; width: 2408px; height: 1578px; }
.scale { position: absolute; left: 2057px; width: 60px; top: 1548px; text-align: center; color: #fff; font-size: 20px; line-height: 26px; }

/* console */
.dock-head.console-head { border-top: 1px solid #999; height: 46px; padding-top: 7px; }
.console-head span { position: absolute; left: 0; right: 0; top: 5px; text-align: center; font-size: 22px; line-height: 36px; padding-left: 69px; }
.console { margin: 24px 24px 26px 24px; height: 164px; flex: none; display: grid; grid-template: 132px 30px / 1fr 30px; border: 1px solid #b4b4b4; border-top-color: #8c8c8c; background: #fafafa; }
.log { padding: 0 0 0 1px; overflow: hidden; display: flex; flex-direction: column; justify-content: flex-end; border-bottom: 1px solid #e4e4e4; background: #fff; }
.log p { margin: 0; height: 34px; flex: none; line-height: 34px; font-size: 24px; letter-spacing: .13px; padding-left: 11px; background: #fff; white-space: nowrap; }
.log p:nth-child(even) { background: #efefef; }
.log-v { border-left: 2px solid #e4e4e4; padding: 93px 0 0 5px; }
.log-v i { display: block; width: 16px; height: 36px; border-radius: 8px; background: #c1c1c1; }
.log-h { padding: 7px 0 0 3px; }
.log-h i { display: block; width: 2930px; height: 16px; border-radius: 8px; background: #c1c1c1; }
.corner { background: #fff; border-left: 1px solid #ccc; border-top: 1px solid #ccc; }
.status { height: 42px; flex: none; border-top: 1px solid #707070; background: linear-gradient(#e6e6e6, #b4b4b4); margin-left: -2px; }

/* menus */
.menu { position: absolute; color: #fff; font-size: 28px; font-weight: 500; }
.mi { height: 38px; line-height: 37px; padding-left: 42px; position: relative; white-space: nowrap; letter-spacing: -.5px; }
.menu hr { border: 0; margin: 10px 0; height: 4px; background: rgba(255,255,255,.24); }
.off { color: rgba(255,255,255,.4); }
.edit-menu { left: 414px; top: 44px; width: 446px; height: 997px; padding-top: 8px; border-radius: 0 0 10px 10px; background: linear-gradient(#6a6667 0, #6b6868 250px, #757575 380px, #757575 600px, #696969 800px, #6a6a6a 100%); box-shadow: 0 10px 40px rgba(0,0,0,.4), 0 0 0 1px rgba(0,0,0,.12); }
.hot { background: linear-gradient(90deg, #c4bcbd, #c2c0c0 40%); }
.arr { position: absolute; left: 398px; top: 8px; border-left: 18px solid #fff; border-top: 10px solid transparent; border-bottom: 10px solid transparent; }
.mi kbd { position: absolute; top: 0; font-family: inherit; font-size: 28px; }
.mi .k-t { left: 375px; }
.mi .k-fn { left: 371px; font-size: 25px; }
.mi .k-sp { left: 298px; letter-spacing: .5px; }
.mi .k-c { left: 436px; letter-spacing: 1px; }
.del { position: absolute; left: 404px; top: 8px; }
.color-menu { left: 860px; top: 55px; width: 506px; height: 383px; padding-top: 9px; border-radius: 10px; background: linear-gradient(100deg, rgba(110,110,110,.75) 0, rgba(90,90,90,.4) 20%, rgba(60,60,60,0) 45%), linear-gradient(#666462 0, #5c5c5b 28%, #4a4a4a 42%, #2b2b2b 65%, #242424 80%); box-shadow: 0 10px 40px rgba(0,0,0,.4), 0 0 0 1px rgba(0,0,0,.3), inset 0 1px 0 rgba(255,255,255,.3); }
.color-menu hr { background: rgba(255,255,255,.2); }
.tag { position: absolute; width: 44px; height: 44px; border: 2px solid #f00; background: #fff; box-shadow: inset 0 0 0 1px #f99; color: #f00; font: 40px/43px "Liberation Sans", sans-serif; text-align: center; padding-right: 4px; }
.t1 { left: 1053px; top: 61px; }
.t2 { left: 1092px; top: 176px; }
.t3 { left: 1205px; top: 212px; }
.t4 { left: 1205px; top: 257px; }
```
FILE: cloud.js
```js
// Scatters the coloured scan points of the slice into the 3D view.
(function () {
  var ctx = document.getElementById('cloud').getContext('2d');
  ctx.translate(-950, -220);
  var s = 12345;
  function rnd() { s = (s * 1664525 + 1013904223) % 4294967296; return s / 4294967296; }
  function pick(a) { return a[Math.floor(rnd() * a.length)]; }
  function dot(x, y, c, w, h) { ctx.fillStyle = c; ctx.fillRect(Math.round(x), Math.round(y), w || 1, h || 2); }

  var leaf = ['#8fae12', '#6b8f14', '#a8c81c', '#4e6e16', '#c4dc30', '#35501a'];
  var pale = ['#ffffff', '#e6f0e0', '#b8ccae', '#7c9a68', '#d8e8d0'];
  var mix = leaf.concat(pale);
  var olive = ['#6e7420', '#4e5618', '#8a8c38', '#2c3810'];
  var dark = ['#35501a', '#2a4a20', '#5c8050', '#446a34'];
  var cream = ['#fff4dc', '#f0dcc0', '#d8bc98', '#ffffff', '#b89c7c', '#4a3c2c'];
  var peach = ['#d8a88c', '#e8c4a8', '#c09078', '#fff0e4'];
  var stone = ['#8c8478', '#a89c90', '#d0c4b4', '#706860', '#c8b49c'];
  var sand = ['#f8d898', '#e8c080', '#ffe8b8', '#c89c60'];
  var dim = ['#5c5040', '#403c30', '#786450', '#2c3420'];

  // Ragged elliptical clump built from small tufts: centre, radii, count, palette
  function clump(cx, cy, rx, ry, n, p) {
    var left = n * 1.5;
    while (left > 0) {
      var a = rnd() * 6.283, r = Math.sqrt(rnd());
      var x = cx + Math.cos(a) * r * rx, y = cy + Math.sin(a) * r * ry;
      var k = Math.min(left, 3 + Math.floor(rnd() * 9)), c = pick(p);
      for (var i = 0; i < k; i++) {
        dot(x + (rnd() + rnd() - 1) * 4, y + (rnd() + rnd() - 1) * 5, rnd() < .6 ? c : pick(p), rnd() < .4 ? 1 : 2, 2);
      }
      left -= k;
    }
  }
  // Quad between four corners, with optional rows of window gaps
  function wall(q, d, p, gaps) {
    var w = Math.hypot(q[2] - q[0], q[3] - q[1]), h = Math.hypot(q[6] - q[0], q[7] - q[1]);
    var n = w * h * d * 1.25;
    for (var i = 0; i < n; i++) {
      var u = rnd(), v = rnd();
      if (gaps && (u * w) % 7 > 4.300 && (v * h) % 9 > 4 && rnd() < .85) continue;
      var x = (1 - v) * ((1 - u) * q[0] + u * q[2]) + v * ((1 - u) * q[6] + u * q[4]);
      var y = (1 - v) * ((1 - u) * q[1] + u * q[3]) + v * ((1 - u) * q[7] + u * q[5]);
      dot(x, y, pick(p), 1, 2);
    }
  }
  function streak(x1, y1, x2, y2, w, d, p) {
    var n = Math.hypot(x2 - x1, y2 - y1) * w * d;
    for (var i = 0; i < n; i++) {
      var t = rnd();
      dot(x1 + (x2 - x1) * t + (rnd() - .5) * w, y1 + (y2 - y1) * t, pick(p), 1, 2);
    }
  }

  // tall tree and its trunk
  clump(2104, 668, 4, 7, 45, pale); clump(2118, 677, 12, 5, 50, mix); clump(2135, 666, 2, 7, 18, pale);
  clump(2103, 697, 3, 3, 10, olive); clump(2134, 696, 1, 2, 9, pale);
  clump(2141, 720, 6, 8, 70, mix); clump(2162, 706, 4, 12, 50, mix); clump(2172, 712, 5, 5, 30, mix);
  clump(2159, 696, 1, 4, 10, pale); clump(2189, 719, 1, 4, 12, pale);
  clump(2183, 726, 5, 10, 50, mix); clump(2160, 745, 16, 10, 200, leaf); clump(2175, 740, 8, 6, 50, leaf); clump(2158, 735, 8, 3, 16, leaf);
  clump(2154, 760, 3, 5, 24, dark); streak(2144, 772, 2135, 802, 6, .7, ['#4c5040', '#7a6450', '#2c4018', '#5c5048']);
  clump(2128, 835, 1, 2, 6, dim);
  // mid canopy over the tower
  streak(2122, 842, 2108, 900, 12, .5, ['#403838', '#5c4c48', '#282828', '#4c3430']);
  clump(2095, 876, 12, 16, 300, ['#6b7a14', '#8a981c', '#56660e', '#a0ac24']);
  clump(2130, 862, 6, 18, 90, dark.concat(leaf)); clump(2135, 842, 1, 4, 8, pale); clump(2078, 861, 3, 5, 22, mix);
  clump(2106, 915, 11, 9, 130, leaf); clump(2086, 905, 4, 10, 24, olive);
  streak(2083, 890, 2078, 916, 4, 1, peach);
  streak(2072, 921, 2064, 955, 7, 1.2, peach.concat(cream)); streak(2064, 950, 2053, 994, 9, 1.4, peach.concat(cream));
  streak(2094, 930, 2076, 1006, 15, 1.2, cream.concat(stone, sand)); streak(2112, 935, 2114, 952, 5, .6, peach);
  streak(2104, 960, 2096, 996, 7, .9, sand);

  // distant fragments on the left
  streak(1348, 792, 1339, 806, 3, 1, ['#fff', '#e8c8b0']); streak(1350, 800, 1343, 812, 3, .9, ['#fff', '#ddd']);
  streak(1354, 798, 1360, 813, 3, 1.2, ['#fff', '#ddd']); clump(1197, 871, 1, 6, 5, ['#fff', '#888']);
  clump(1490, 863, 5, 5, 36, olive.concat(['#b8a860'])); streak(1474, 867, 1488, 864, 3, .6, olive.concat(['#fff']));
  clump(1541, 851, 5, 3, 12, olive); streak(1512, 872, 1526, 886, 5, .5, dim); clump(1533, 889, 8, 2, 34, ['#8c8850', '#6a6838', '#a8a070']);
  clump(1615, 894, 2, 3, 28, ['#e8e820', '#b0c010', '#809010']); clump(1577, 893, 8, 1, 4, dim);
  for (var x = 1660; x < 1785; x += 5) {
    var t = (x - 1660) / 125;
    streak(x, 887 + t * 28, x, 910 + t * 30, 2, .25 + .35 * t, ['#fff4dc', '#a09070', '#685c44', '#c8bc98']);
  }
  streak(1696, 891, 1785, 914, 2, .9, ['#8a7c3c', '#a08c50']); streak(1784, 912, 1783, 941, 2, 1, ['#fff', '#e0d0b0']);
  clump(1741, 935, 5, 10, 30, leaf); clump(1727, 958, 4, 4, 16, leaf); clump(1664, 924, 4, 1, 5, leaf);

  // left facades
  streak(1604, 974, 1672, 992, 5, .5, ['#fff', '#ccc']); wall([1636, 978, 1682, 990, 1682, 1005, 1640, 985], .8, ['#fff', '#f4e4d4']);
  wall([1680, 982, 1753, 999, 1752, 1019, 1680, 1000], 1, cream.concat(['#fff', '#fff4dc']), true);
  streak(1694, 974, 1734, 984, 8, .5, cream);
  streak(1671, 998, 1752, 1017, 4, .7, cream); streak(1751, 997, 1752, 1019, 2, 1, ['#fff']);
  wall([1775, 998, 1850, 1027, 1850, 1041, 1775, 1021], 1.2, sand, true);
  streak(1775, 996, 1776, 1021, 4, 1.2, ['#f8d898']); streak(1800, 1003, 1850, 1026, 6, .8, cream);
  wall([1850, 1029, 1876, 1041, 1874, 1049, 1850, 1041], .8, cream);

  // middle buildings and street
  wall([1817, 939, 1911, 956, 1911, 974, 1818, 950], .35, cream.concat(dim), true);
  wall([1862, 940, 1911, 953, 1911, 972, 1870, 960], .7, cream, true); clump(1890, 933, 2, 4, 34, ['#d8947c', '#e0a890']);
  wall([1910, 976, 2060, 1008, 2160, 1040, 1945, 1000], .5, stone);
  wall([2010, 1005, 2176, 1036, 2246, 1070, 2050, 1028], 1, stone.concat(['#9a94a0']));
  wall([2020, 1018, 2060, 1020, 2090, 1046, 2040, 1034], 1, sand.concat(['#fff']));
  wall([2080, 1030, 2110, 1036, 2160, 1060, 2100, 1046], .9, ['#fff8d8', '#f8e8b0', '#fff']);
  streak(1936, 1010, 1985, 1026, 4, .8, sand); streak(1984, 1018, 2070, 1044, 4, .5, peach); streak(2110, 1049, 2180, 1067, 4, .7, peach.concat(stone));
  wall([1952, 963, 1997, 972, 1994, 993, 1952, 981], .9, cream.concat(stone), true);
  wall([2015, 972, 2050, 981, 2050, 999, 2018, 992], .9, cream.concat(stone), true);
  clump(1897, 973, 12, 9, 130, ['#c8b838', '#a09020', '#e8dc60', '#807018']); clump(1890, 990, 9, 4, 22, olive);
  clump(1885, 995, 16, 1, 18, mix);
  clump(2000, 990, 14, 20, 320, mix); clump(2005, 1008, 12, 18, 240, ['#c8e038', '#98b81c', '#e4f080', '#6a8818']);
  clump(1990, 990, 8, 14, 90, pale);
  clump(2047, 1013, 14, 14, 400, pale); clump(2100, 1031, 11, 13, 240, pale.concat(['#8cb070']));
  streak(2072, 985, 2068, 1016, 10, .9, ['#606060', '#888078', '#504c48']);
  wall([2079, 995, 2130, 1006, 2128, 1028, 2079, 1016], 1.2, ['#f8e8dc', '#e8ccc0', '#fff', '#d0b0a0'], true);
  streak(2092, 990, 2112, 997, 6, .8, ['#fff', '#f0c8b8']);
  wall([2147, 1011, 2178, 1015, 2179, 1037, 2147, 1028], 1, cream.concat(stone), true);
  streak(2148, 1010, 2164, 1001, 3, 1.2, ['#f0d0b8', '#fff']);
  clump(2152, 1043, 15, 11, 120, leaf); clump(2200, 1002, 2, 8, 50, pale); clump(2193, 1018, 3, 12, 70, dark.concat(['#8cb088']));
  streak(2189, 1035, 2247, 1050, 9, .7, leaf.concat(dark));
  wall([2164, 1045, 2247, 1060, 2246, 1073, 2172, 1057], .7, ['#fff', '#fff8e0', '#fff', '#c8c0b0', '#000', '#222']);
  clump(2253, 1064, 9, 13, 66, olive.concat(leaf)); clump(2299, 1072, 6, 15, 42, olive);
  clump(2325, 1055, 4, 2, 14, ['#a8b820', '#d8d850', '#687818']); clump(2328, 1064, 10, 2, 12, dim); clump(2290, 1088, 3, 5, 12, olive);
  clump(2401, 1096, 9, 11, 36, olive.concat(dim)); clump(2418, 1078, 10, 2, 12, dark); clump(2486, 1083, 5, 4, 30, olive.concat(leaf));
  clump(2547, 1115, 7, 8, 20, olive); clump(2541, 1085, 1, 4, 12, dim.concat(dark));
  streak(2400, 1022, 2398, 1040, 3, 1, pale); streak(2397, 1034, 2394, 1070, 7, 1.1, dark);
  streak(2277, 970, 2276, 994, 2, 1, ['#f0dce0', '#fff']); clump(2276, 998, 1, 1, 4, pale);
  streak(2296, 1033, 2297, 1058, 2, .7, ['#b8a088', '#706050']); streak(2285, 1038, 2286, 1056, 2, .5, dim);
  streak(2346, 1082, 2346, 1095, 2, .6, cream); streak(2351, 1083, 2352, 1095, 2, .5, cream);
  streak(2432, 1110, 2432, 1120, 2, .6, dim);

  // lower facades
  wall([1904, 1031, 1971, 1040, 1969, 1068, 1903, 1050], 1, cream, true); streak(1912, 1026, 1968, 1036, 8, .7, ['#fff', '#f0dcc0']);
  streak(1968, 1036, 1958, 1080, 8, 1.2, ['#fff', '#f0dcc8', '#e0b8a0']); streak(1962, 1070, 1938, 1128, 10, 1, cream.concat(peach));
  streak(1956, 1090, 1921, 1168, 7, 1.1, ['#fff', '#e8d8c8', '#d8a890']); streak(1946, 1085, 1932, 1120, 12, .5, peach);
  clump(1897, 1151, 2, 4, 40, ['#c08c78', '#d8a890']); streak(1898, 1122, 1897, 1148, 3, .7, ['#fff', '#c8a890']);
  clump(1920, 1104, 6, 2, 14, ['#fff', '#ccc', '#d8a890']);
  for (var i = 0; i < 30; i++) dot(1862 + rnd() * 40, 1060 + rnd() * 40, pick(dim), 1, 3);
  wall([2002, 1055, 2044, 1064, 2043, 1093, 2004, 1080], 1, ['#c8a88c', '#e8d0b8', '#fff', '#8c7058'], true);
  wall([2048, 1061, 2142, 1087, 2141, 1122, 2048, 1094], 1.1, ['#fff4dc', '#f0e4c8', '#fff', '#b0a888', '#c8a888'], true);
  streak(2046, 1060, 2142, 1086, 3, 1, ['#fff', '#fff4dc']); streak(2141, 1086, 2141, 1122, 2, 1, ['#fff']);
  streak(2006, 1052, 2035, 1058, 5, .9, peach);
  for (i = 0; i < 90; i++) { var u = rnd(); dot(2000 + u * 130, 1088 + u * 28 + rnd() * rnd() * 46, pick(dim.concat(['#886858'])), 1, 2 + rnd() * 4); }
  for (i = 0; i < 26; i++) dot(1985 + rnd() * 330, 1120 + rnd() * 60, pick(dim.concat(['#999'])), 1, 3);
  for (i = 0; i < 16; i++) dot(1790 + rnd() * 600, 1080 + rnd() * 140, pick(dim), 1, 2);
  wall([2150, 1126, 2175, 1130, 2186, 1160, 2182, 1156], 1, ['#e8e070', '#c8b060', '#a89060', '#f0e890']);
  streak(2142, 1124, 2168, 1152, 2, .6, sand);
  wall([2186, 1132, 2199, 1133, 2199, 1167, 2187, 1167], 1.4, ['#d8bc98', '#c0a080', '#a88868', '#e8d0b0']);
  streak(2197, 1106, 2192, 1132, 5, .9, ['#e0c4b0', '#a88878']); clump(2232, 1105, 3, 1, 7, ['#fff']); streak(2208, 1108, 2220, 1120, 4, .4, dim);
  streak(2234, 1142, 2233, 1162, 3, .5, peach);
  wall([2261, 1129, 2298, 1132, 2310, 1152, 2263, 1146], 1, ['#fff', '#fff0e8', '#e8d8d0', '#c0a8a0'], true);
  wall([2295, 1138, 2373, 1156, 2373, 1165, 2300, 1152], 1, ['#fff', '#fff0d0', '#e8dcb8'], true);
  streak(2245, 1173, 2244, 1190, 2, 1, ['#c8dcd0', '#fff']); streak(2245, 1188, 2244, 1212, 5, 1.1, ['#c8dcd0', '#fff', '#a8c4b4']);
  streak(2255, 1172, 2254, 1186, 2, .6, peach);
  streak(2327, 1158, 2327, 1196, 4, .9, ['#e0d0c8', '#b8a89c', '#fff']); streak(2327, 1195, 2320, 1214, 5, 1, ['#e0c8b4', '#a89484']);
  streak(2319, 1212, 2307, 1225, 5, 1, ['#e0c8b4', '#a89484', '#fff']); streak(2333, 1182, 2330, 1200, 2, .6, cream);
  wall([2426, 1164, 2439, 1165, 2437, 1174, 2428, 1172], .7, ['#fff', '#f0dcc0']);
  wall([2470, 1171, 2524, 1182, 2522, 1187, 2470, 1180], .9, ['#fff4dc', '#fff', '#d8c8a8']);
  wall([2524, 1180, 2581, 1184, 2580, 1191, 2524, 1186], .5, ['#b08c70', '#d8b898', '#806850']);
  streak(2383, 1149, 2396, 1158, 5, .5, dim.concat(peach)); streak(2396, 1148, 2406, 1158, 2, .7, peach);

  // far right fragments
  streak(2635, 1048, 2633, 1058, 2, 1, ['#f0dcd8', '#fff']); streak(2632, 1056, 2624, 1063, 2, .8, ['#e8d0c8']); streak(2623, 1062, 2623, 1091, 2, 1, ['#d8ac94', '#c09880']);
  streak(2645, 1066, 2648, 1123, 3, .3, ['#e8c8b8', '#a88878', '#fff']); streak(2688, 1076, 2688, 1101, 3, .7, ['#d8b0a0', '#907060']);
  streak(2700, 1059, 2700, 1063, 1, 1, ['#fff']); streak(2763, 1131, 2763, 1144, 4, .5, ['#3c4830', '#586048']); streak(2913, 1163, 2913, 1177, 2, .6, ['#a09478']);
  [[2632,1041],[2711,1097],[2604,1110],[2650,1144],[2682,1124],[2810,1128],[2804,1126],[2820,1170],[2838,1174],[2761,1215],[2946,1228],[3020,1202],[3060,1203],[3070,1206],[2439,1313],[2366,1254],[2333,1230],[2605,1195],[2773,1131],[2900,1172]].forEach(function (p) { dot(p[0], p[1], pick(['#888', '#a09070', '#5c6040']), 1, 3); });
})();
```
